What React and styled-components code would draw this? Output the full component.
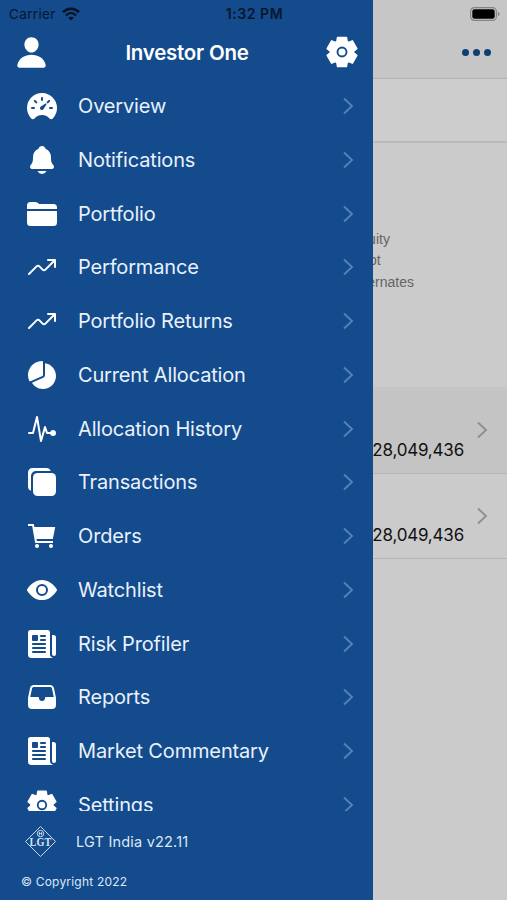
import React from "react";

import styled, { createGlobalStyle } from "styled-components";
import {
  IoPerson,
  IoSpeedometer,
  IoNotifications,
  IoFolder,
  IoTrendingUp,
  IoPieChart,
  IoPulse,
  IoCopy,
  IoCartSharp,
  IoEye,
  IoNewspaper,
  IoFileTray,
} from "react-icons/io5";

const GlobalStyle = createGlobalStyle`
  * {
    box-sizing: border-box;
  }
  body {
    margin: 0;
    font-family: Inter, "Liberation Sans", sans-serif;
  }
`;

const Screen = styled("div")`
  position: relative;
  width: 507px;
  height: 900px;
  overflow: hidden;
  background-color: #cbcbcb;
`;

const Page = styled("div")`
  display: flex;
  flex-direction: column;
  height: 100%;
`;

const PageHeader = styled("div")`
  height: 79px;
  padding: 27px 16px 0;
  display: flex;
  justify-content: flex-end;
  align-items: center;
  background-color: #c6c6c6;
  border-bottom: 1px solid #b4b4b4;
`;

const MoreButton = styled("div")`
  display: flex;
  gap: 4px;
`;

const MoreDot = styled("span")`
  width: 7px;
  height: 7px;
  border-radius: 50%;
  background-color: #0e3f74;
`;

const Toolbar = styled("div")`
  height: 64px;
  border-bottom: 2px solid #bababa;
  background-color: #cdcdcd;
`;

const ChartArea = styled("div")`
  height: 244px;
  padding: 86px 0 0 351px;
`;

const LegendItem = styled("div")`
  height: 21.4px;
  line-height: 21.4px;
  font-family: "Liberation Sans", sans-serif;
  font-size: 14px;
  color: #646464;
`;

const AssetRow = styled("div")`
  height: ${(props) => (props.$active ? 87 : 85)}px;
  padding: 0 19px 0 0;
  display: flex;
  justify-content: flex-end;
  gap: 12px;
  background-color: ${(props) => (props.$active ? "#c4c4c4" : "#cbcbcb")};
  border-bottom: 1px solid #b6b6b6;
`;

const AssetValue = styled("div")`
  padding-bottom: 12px;
  align-self: flex-end;
  font-size: 17px;
  line-height: 22px;
  letter-spacing: -0.2px;
  color: #111;
`;

const AssetArrow = styled("div")`
  display: flex;
  align-items: center;
  color: #8f8f8f;
`;

const Drawer = styled("div")`
  position: absolute;
  top: 0;
  left: 0;
  width: 372.5px;
  height: 900px;
  display: flex;
  flex-direction: column;
  color: white;
  background-color: #134b8d;
`;

const DrawerHeader = styled("div")`
  height: 79px;
  padding: 25px 13.5px 0 14px;
  display: flex;
  justify-content: space-between;
  align-items: center;
`;

const DrawerTitle = styled("div")`
  font-size: 20.5px;
  font-weight: 600;
  letter-spacing: -0.25px;
`;

const Menu = styled("div")`
  height: 732px;
  overflow: hidden;
`;

const MenuItem = styled("div")`
  height: 53.75px;
  padding: 0.5px 18.5px 0 26px;
  display: flex;
  align-items: center;
`;

const MenuLabel = styled("div")`
  flex: 1;
  margin-left: 20px;
  font-size: 20px;
  letter-spacing: -0.16px;
  color: #e9f1fb;
`;

const MenuArrow = styled("div")`
  display: flex;
  color: #5482b6;
`;

const Version = styled("div")`
  height: 61px;
  padding-left: 24px;
  display: flex;
  align-items: center;
  gap: 19px;
  font-size: 14.5px;
  letter-spacing: 0.2px;
  color: #dbe7f5;
`;

const Copyright = styled("div")`
  padding: 1px 0 0 21px;
  font-size: 12px;
  line-height: 18px;
  letter-spacing: 0.2px;
  color: #dbe7f5;
`;

const StatusBar = styled("div")`
  position: absolute;
  top: 0;
  left: 0;
  width: 100%;
  height: 27px;
  padding: 0 7px 0 9px;
  display: grid;
  grid-template-columns: 1fr auto 1fr;
  align-items: center;
  font-size: 13px;
  color: #07172b;
`;

const Carrier = styled("div")`
  display: flex;
  align-items: center;
  gap: 6px;
  font-size: 13.5px;
  letter-spacing: 0.35px;
`;

const Clock = styled("div")`
  font-size: 14px;
  font-weight: 600;
  letter-spacing: 0.55px;
`;

const BatterySlot = styled("div")`
  display: flex;
  justify-content: flex-end;
`;

const Chevron = () => (
  <svg width="12" height="18" viewBox="0 0 12 18" fill="none">
    <path d="M2 1.5L10 9L2 16.5" stroke="currentColor" strokeWidth="1.9" />
  </svg>
);

const teeth = [0, 60, 120, 180, 240, 300];

// six blunt teeth around a hub
const Gear = ({ size }) => (
  <svg width={size} height={size} viewBox="0 0 34 34" fill="currentColor">
    <circle cx="17" cy="17" r="12.2" />
    {teeth.map((angle) => (
      <path
        key={angle}
        d="M12.6 2.5H21.4L22.3 8H11.7Z"
        stroke="currentColor"
        strokeWidth="1.6"
        strokeLinejoin="round"
        transform={`rotate(${angle} 17 17)`}
      />
    ))}
    <circle cx="17" cy="17" r="4.5" fill="none" stroke="#134b8d" strokeWidth="1.9" />
  </svg>
);

const Wifi = () => (
  <svg width="18" height="14" viewBox="0 0 18 14" fill="none" stroke="#07111f">
    <path d="M1 5.2C5.5.6 12.500.6 17 5.200" strokeWidth="2.500" />
    <path d="M4 8.300C7 5.400 11 5.400 14 8.300" strokeWidth="2.300" />
    <path d="M9 13.500L6.200 10.800Q9 8.500 11.800 10.800Z" fill="#07111f" stroke="none" />
  </svg>
);

const Battery = () => (
  <svg width="30" height="14" viewBox="0 0 30 14">
    <rect x=".6" y=".6" width="25.800" height="12.800" rx="3.800" fill="none" stroke="#858585" strokeWidth="1.200" />
    <rect x="2.300" y="2.300" width="22.400" height="9.400" rx="2.200" fill="#000" />
    <path d="M27.800 4.800Q29.600 5.500 29.600 7T27.800 9.200Z" fill="#858585" />
  </svg>
);

const Logo = () => (
  <svg width="33" height="33" viewBox="0 0 33 33" fill="none" stroke="#c5d8ee">
    <path d="M7 11L1.500 16.500L16.500 31.500L31.500 16.500L26 11L16.500 1.500Z" />
    <circle cx="16.500" cy="8.600" r="3.200" />
    <path d="M15.500 7V10.400M17.500 7V10.400M14.500 8.600H18.500" strokeWidth=".8" />
    <text
      x="16.500"
      y="21"
      textAnchor="middle"
      textLength="22"
      lengthAdjust="spacingAndGlyphs"
      fontFamily="Liberation Serif, serif"
      fontSize="13"
      fontWeight="700"
      fill="#d5e3f3"
      stroke="none"
    >
      LGT
    </text>
  </svg>
);

const menuItems = [
  { label: "Overview", icon: IoSpeedometer },
  { label: "Notifications", icon: IoNotifications },
  { label: "Portfolio", icon: IoFolder },
  { label: "Performance", icon: IoTrendingUp },
  { label: "Portfolio Returns", icon: IoTrendingUp },
  { label: "Current Allocation", icon: IoPieChart },
  { label: "Allocation History", icon: IoPulse },
  { label: "Transactions", icon: IoCopy },
  { label: "Orders", icon: IoCartSharp },
  { label: "Watchlist", icon: IoEye },
  { label: "Risk Profiler", icon: IoNewspaper },
  { label: "Reports", icon: IoFileTray },
  { label: "Market Commentary", icon: IoNewspaper },
  { label: "Settings", icon: Gear },
];

const legend = ["Equity", "Debt", "Alternates"];

const App = () => {
  return (
    <Screen>
      <GlobalStyle />
      <Page>
        <PageHeader>
          <MoreButton>
            <MoreDot />
            <MoreDot />
            <MoreDot />
          </MoreButton>
        </PageHeader>
        <Toolbar />
        <ChartArea>
          {legend.map((item) => (
            <LegendItem key={item}>{item}</LegendItem>
          ))}
        </ChartArea>
        {[true, false].map((active) => (
          <AssetRow key={String(active)} $active={active}>
            <AssetValue>28,049,436</AssetValue>
            <AssetArrow>
              <Chevron />
            </AssetArrow>
          </AssetRow>
        ))}
      </Page>

      <Drawer>
        <DrawerHeader>
          <IoPerson size={35} />
          <DrawerTitle>Investor One</DrawerTitle>
          <Gear size={34} />
        </DrawerHeader>
        <Menu>
          {menuItems.map(({ label, icon: ItemIcon }) => (
            <MenuItem key={label}>
              <ItemIcon size={32} />
              <MenuLabel>{label}</MenuLabel>
              <MenuArrow>
                <Chevron />
              </MenuArrow>
            </MenuItem>
          ))}
        </Menu>
        <Version>
          <Logo />
          LGT India v22.11
        </Version>
        <Copyright>© Copyright 2022</Copyright>
      </Drawer>

      <StatusBar>
        <Carrier>
          Carrier
          <Wifi />
        </Carrier>
        <Clock>1:32 PM</Clock>
        <BatterySlot>
          <Battery />
        </BatterySlot>
      </StatusBar>
    </Screen>
  );
};

export default App;
